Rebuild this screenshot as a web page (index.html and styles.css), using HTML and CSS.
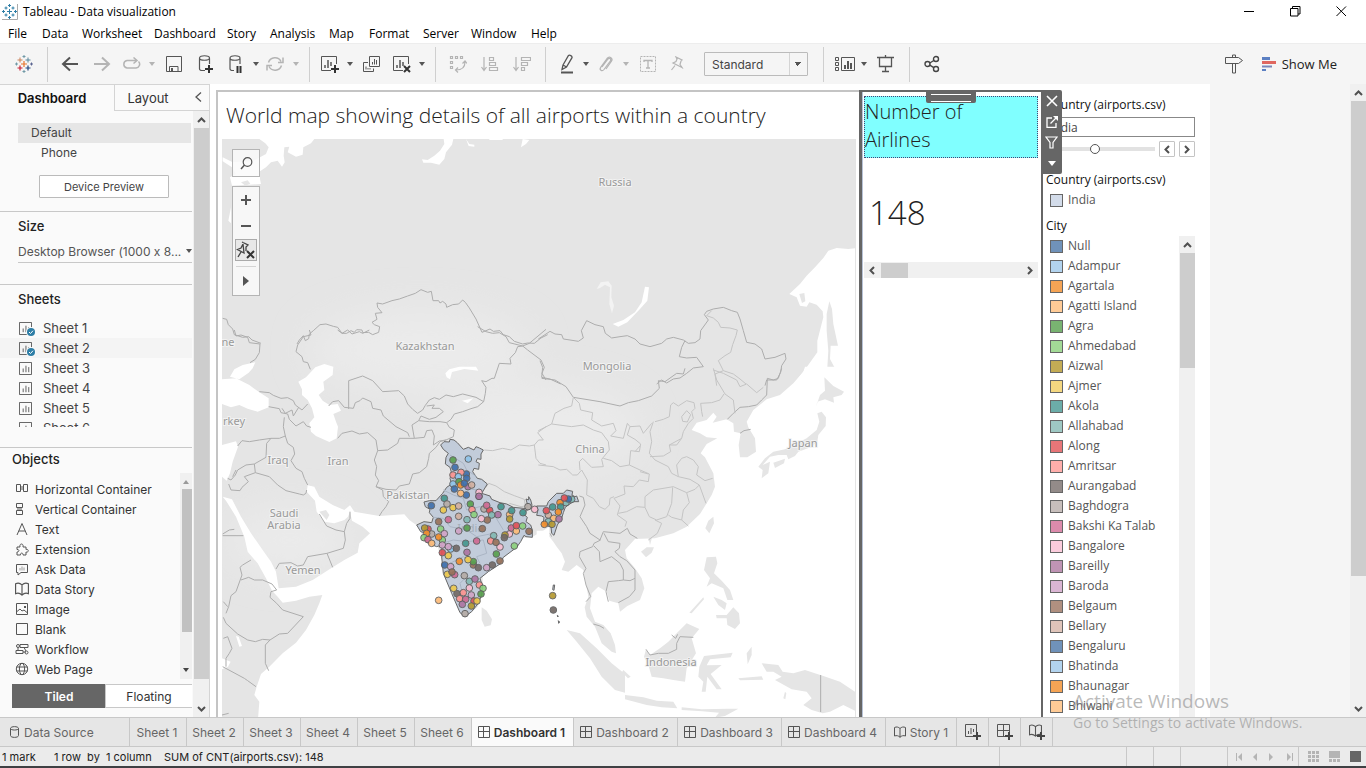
FILE: index.html
```html
<!DOCTYPE html>
<html lang="en">
<head>
<meta charset="utf-8">
<title>Tableau - Data visualization</title>
<meta name="viewport" content="width=device-width, initial-scale=1">
<link rel="stylesheet" href="styles.css">
</head>
<body>
<svg class="defs" width="0" height="0" aria-hidden="true">
  <defs>
    <symbol id="i-sheet" viewBox="0 0 14 14"><path d="M.5.5h13v13H.5zM4.5 7v4M7.500 4v7M10.500 5.500v5.500" fill="none" stroke="#555"/></symbol>
    <symbol id="i-check" viewBox="0 0 10 10"><circle cx="5" cy="5" r="5" fill="#fafafa"/><circle cx="5" cy="5" r="4" fill="#2e7ea6"/><path d="M3 5l1.500 1.500L7 3.700" fill="none" stroke="#fff"/></symbol>
    <symbol id="i-dash" viewBox="0 0 12 12"><path d="M.5.5h11v11H.5zM5.500.5v11M.5 5.500h11" fill="none" stroke="#555"/></symbol>
    <symbol id="i-story" viewBox="0 0 12 12"><path d="M.5 1.500c2-1 4-.5 5.500 1 1.500-1.500 3.500-2 5.500-1v8.500c-2-.8-4-.3-5.500 1.200C4.500 9.700 2.500 9.200.5 10zM6 2.500v9" fill="none" stroke="#555"/></symbol>
    <symbol id="i-up" viewBox="0 0 9 6"><path d="M1 5l3.500-3.500L8 5" fill="none" stroke="#505050" stroke-width="2"/></symbol>
    <symbol id="i-down" viewBox="0 0 9 6"><path d="M1 1l3.500 3.500L8 1" fill="none" stroke="#505050" stroke-width="2"/></symbol>
    <symbol id="i-left" viewBox="0 0 6 9"><path d="M5 1L1.500 4.500 5 8" fill="none" stroke="#505050" stroke-width="2"/></symbol>
    <symbol id="i-right" viewBox="0 0 6 9"><path d="M1 1l3.500 3.500L1 8" fill="none" stroke="#505050" stroke-width="2"/></symbol>
    <symbol id="i-caret" viewBox="0 0 6 4"><path d="M0 0h6L3 4z" fill="currentColor"/></symbol>
    <symbol id="i-plus" viewBox="0 0 8 8"><path d="M4 0v8M0 4h8" fill="none" stroke="#444" stroke-width="2"/></symbol>
  </defs>
</svg>

<div class="app">
  <header class="titlebar">
    <svg class="app-icon" viewBox="0 0 16 16" width="16" height="16" aria-hidden="true"><path d="M0 15.500h15.500V0" fill="none" stroke="#aaa"/><path d="M7.500 5v5M5 7.500h5M4 2.500v3M2.500 4h3M11 2.500v3M9.500 4h3M4 9.500v3M2.500 11h3M11 9.500v3M9.500 11h3M7.500 0v3M6 1.500h3M7.500 12v3M6 13.500h3M1.500 6v3M0 7.500h3M13.500 6v3M12 7.500h3" fill="none" stroke="#2e7ea6"/></svg>
    <h1 class="app-title">Tableau - Data visualization</h1>
    <div class="win-buttons">
      <button type="button" aria-label="Minimize"><svg width="11" height="11" viewBox="0 0 11 11"><path d="M0 5.500h10" stroke="#000"/></svg></button>
      <button type="button" aria-label="Restore"><svg width="11" height="11" viewBox="0 0 11 11"><path d="M.5 2.500h7.500v7.500H.5zM2.500 2.500v-2H10v7.500H8" fill="none" stroke="#000"/></svg></button>
      <button type="button" aria-label="Close"><svg width="11" height="11" viewBox="0 0 11 11"><path d="M.5.5l9.500 9.500M10 .5L.5 10" stroke="#000"/></svg></button>
    </div>
  </header>

  <nav class="menubar" aria-label="Main menu">
    <button type="button">File</button><button type="button">Data</button><button type="button">Worksheet</button><button type="button">Dashboard</button><button type="button">Story</button><button type="button">Analysis</button><button type="button">Map</button><button type="button">Format</button><button type="button">Server</button><button type="button">Window</button><button type="button">Help</button>
  </nav>

  <div class="toolbar" role="toolbar" aria-label="Toolbar">
    <button type="button" class="tool" aria-label="Start page"><svg width="18" height="18" viewBox="0 0 18 18"><g fill="none"><path d="M9 6v6M6 9h6" stroke="#e8762d" stroke-width="1.200"/><path d="M5 2.500v5M2.500 5h5" stroke="#c9825a"/><path d="M13 2.500v5M10.500 5h5" stroke="#59879b"/><path d="M5 10.500v5M2.500 13h5" stroke="#c72035" stroke-width="1.200"/><path d="M13 10.500v5M10.500 13h5" stroke="#1f447e" stroke-width="1.200"/><path d="M9 0v3M7.500 1.500h3M9 15v3M7.500 16.500h3" stroke="#7099a6"/><path d="M1.500 7.500v3M0 9h3" stroke="#7099a6"/><path d="M16.500 7.500v3M15 9h3" stroke="#5b6591"/></g></svg></button>
    <span class="sep"></span>
    <button type="button" class="tool" aria-label="Undo"><svg width="18" height="16" viewBox="0 0 18 16"><path d="M17 8H2M9 1.500L2 8l7 6.500" fill="none" stroke="#555" stroke-width="2"/></svg></button>
    <button type="button" class="tool" aria-label="Redo"><svg width="18" height="16" viewBox="0 0 18 16"><path d="M1 8h15M9 1.500L16 8l-7 6.500" fill="none" stroke="#b4b4b4" stroke-width="2"/></svg></button>
    <button type="button" class="tool split off" aria-label="Replay"><svg width="20" height="14" viewBox="0 0 20 14"><path d="M11 3.500H5a3.800 3.800 0 000 7.500h9a3.800 3.800 0 002.500-6.500M8.500 3.500h6M11.500.5l3.500 3-3.500 3" fill="none" stroke="#b4b4b4" stroke-width="1.500"/></svg><svg class="caret"><use href="#i-caret"/></svg></button>
    <button type="button" class="tool" aria-label="Save"><svg width="16" height="16" viewBox="0 0 16 16"><path d="M.5.5h15v15H.5zM3.500 15.500v-5h8.500v5" fill="none" stroke="#555"/><path d="M5 12h2v3H5z" fill="#555"/></svg></button>
    <button type="button" class="tool" aria-label="New data source"><svg width="16" height="18" viewBox="0 0 16 18"><path d="M7 15.500H4c-1.500 0-2.500-.8-2.500-1.800V3.500M11.500 3.500V9M1.500 3c0-3 10-3 10 0s-10 3-10 0" fill="none" stroke="#555" stroke-width="1.200"/><path d="M11 10v8M7 14h8" stroke="#333" stroke-width="2"/></svg></button>
    <button type="button" class="tool split" aria-label="Pause auto updates"><svg width="20" height="18" viewBox="0 0 20 18"><path d="M8 15.500H6.500c-1.500 0-2.500-.8-2.500-1.800V3.500M14 3.500V9M4 3c0-3 10-3 10 0s-10 3-10 0" fill="none" stroke="#555" stroke-width="1.200"/><path d="M11.500 11v7M14.500 11v7" stroke="#333" stroke-width="2"/></svg><svg class="caret"><use href="#i-caret"/></svg></button>
    <button type="button" class="tool split off" aria-label="Run update"><svg width="18" height="16" viewBox="0 0 18 16"><path d="M2.500 6.500a6.800 6.800 0 0112.500-1M15.500 9.500a6.800 6.800 0 01-12.500 1M17 1.500v5h-5M1 14.500v-5h5" fill="none" stroke="#b4b4b4" stroke-width="1.500"/></svg><svg class="caret"><use href="#i-caret"/></svg></button>
    <span class="sep"></span>
    <button type="button" class="tool split" aria-label="New worksheet"><svg width="20" height="18" viewBox="0 0 20 18"><path d="M11 15.500H1.500V1.500h15V9" fill="none" stroke="#555"/><path d="M5 10v3M8 5v8M11 7v4" stroke="#555" stroke-width="1.500"/><path d="M15 10v8M11 14h8" stroke="#333" stroke-width="2"/></svg><svg class="caret"><use href="#i-caret"/></svg></button>
    <button type="button" class="tool" aria-label="Duplicate"><svg width="18" height="17" viewBox="0 0 18 17"><path d="M6.500.5h10v10h-10zM5 6.500H.5v9h10v-3M9.500 6v2.500M11.500 3v5.500M13.500 4v4.500M3 10.500v3M5 12v1.500M7 12v1.500" fill="none" stroke="#555"/></svg></button>
    <button type="button" class="tool split" aria-label="Clear sheet"><svg width="20" height="18" viewBox="0 0 20 18"><path d="M11 15.500H1.500V1.500h15V9" fill="none" stroke="#555"/><path d="M5 10v3M8 5v8M11 7v4" stroke="#555" stroke-width="1.500"/><path d="M12 11l6 6M18 11l-6 6" stroke="#333" stroke-width="2"/></svg><svg class="caret"><use href="#i-caret"/></svg></button>
    <span class="sep"></span>
    <button type="button" class="tool" aria-label="Swap rows and columns"><svg width="18" height="18" viewBox="0 0 18 18"><path d="M1.500 1.500h2v2h-2zM6.500 1.500h2v2h-2zM11.500 1.500h2v2h-2zM1.500 6.500h2v2h-2zM1.500 11.500h2v2h-2zM16 7c0 5-3 8-9 8M13.500 8.500L16 6l2 2.500M9 12.500L6.500 15 9 17.500" fill="none" stroke="#b4b4b4" stroke-width="1.200"/></svg></button>
    <button type="button" class="tool" aria-label="Sort ascending"><svg width="18" height="16" viewBox="0 0 18 16"><path d="M3 1v13M.5 11L3 14.500 5.500 11M8.500 1.500h4v3h-4zM8.500 6.500h6v3h-6zM8.500 11.500h8v3h-8z" fill="none" stroke="#b4b4b4" stroke-width="1.200"/></svg></button>
    <button type="button" class="tool" aria-label="Sort descending"><svg width="18" height="16" viewBox="0 0 18 16"><path d="M3 1v13M.5 11L3 14.500 5.500 11M8.500 1.500h9v3h-9zM8.500 6.500h6v3h-6zM8.500 11.500h3v3h-3z" fill="none" stroke="#b4b4b4" stroke-width="1.200"/></svg></button>
    <span class="sep"></span>
    <button type="button" class="tool split" aria-label="Highlight"><svg width="20" height="20" viewBox="0 0 20 20"><path d="M5 18.500h12" stroke="#555" stroke-width="2"/><path d="M7 11l5.500-9.500c1-1 4 .5 3.500 2.200L10.500 13 6 15.500zM7 11l3.500 2" fill="none" stroke="#555" stroke-width="1.300"/></svg><svg class="caret"><use href="#i-caret"/></svg></button>
    <button type="button" class="tool split off" aria-label="Group members"><svg width="18" height="18" viewBox="0 0 18 18"><path d="M6 12l6-8c1.500-1.800 3.500.2 2.300 2L8 14.500c-2 2.500-5 .3-3.300-2.200L11 3.500c2.500-3 6.500-.2 4.300 3L10 14" fill="none" stroke="#b4b4b4" stroke-width="1.200"/></svg><svg class="caret"><use href="#i-caret"/></svg></button>
    <button type="button" class="tool" aria-label="Show mark labels"><svg width="16" height="16" viewBox="0 0 16 16"><path d="M.5.5h15v15H.5z" fill="none" stroke="#b4b4b4" stroke-dasharray="2 1"/><path d="M4 6V4.500h8V6M8 4.500V12M6 12h4" fill="none" stroke="#b4b4b4" stroke-width="1.300"/></svg></button>
    <button type="button" class="tool pin" aria-label="Fix axes"><svg width="14" height="16" viewBox="0 0 14 16"><path d="M6 1l6 3-1 1-1 3.500 2 3-9-4.500 3-1.500L7 3zM5 9.500L1.500 14" fill="none" stroke="#b4b4b4" stroke-width="1.200"/></svg></button>
    <select class="fit" aria-label="Fit"><option>Standard</option></select>
    <span class="sep"></span>
    <button type="button" class="tool split" aria-label="Show cards"><svg width="22" height="16" viewBox="0 0 22 16"><path d="M1.500 1.500h3v3h-3zM1.500 6.500h3v3h-3zM1.500 11.500h3v3h-3zM7.500 1.500h13v13h-13z" fill="none" stroke="#555"/><path d="M11 9v4M14 5v8M17 7v6" stroke="#555" stroke-width="2"/></svg><svg class="caret"><use href="#i-caret"/></svg></button>
    <button type="button" class="tool" aria-label="Presentation mode"><svg width="18" height="18" viewBox="0 0 18 18"><path d="M0 2.500h17M2.500 3v8.500h12V3M8.500 0v2M8.500 11.500V16M5 16.500h7" fill="none" stroke="#555" stroke-width="1.300"/></svg></button>
    <span class="sep"></span>
    <button type="button" class="tool" aria-label="Share"><svg width="16" height="18" viewBox="0 0 16 18"><g fill="none" stroke="#444" stroke-width="1.400"><circle cx="3.500" cy="9" r="2.500"/><circle cx="12" cy="4" r="2.500"/><circle cx="12" cy="14" r="2.500"/><path d="M5.800 8l4-2.500M5.800 10.200l4 2.500"/></g></svg></button>
    <span class="grow"></span>
    <button type="button" class="tool" aria-label="Guide"><svg width="20" height="20" viewBox="0 0 20 20"><path d="M1.500 3.500h13l4 3-4 3h-13zM8.500 3.500V1h3v2.500M8.500 9.500v9.500h3V9.500" fill="none" stroke="#555"/></svg></button>
    <button type="button" class="showme"><svg width="15" height="14" viewBox="0 0 15 14"><path d="M0 1.500h8" stroke="#5b7fc2" stroke-width="3"/><path d="M0 5.500h14" stroke="#e0675f" stroke-width="3"/><path d="M0 9.500h10" stroke="#7b87b8" stroke-width="2"/><path d="M0 13h4" stroke="#5b7fc2" stroke-width="2"/></svg>Show Me</button>
  </div>

  <main class="body">
    <aside class="side">
      <div class="side-tabs">
        <button type="button" class="side-tab on">Dashboard</button>
        <button type="button" class="side-tab">Layout</button>
        <button type="button" class="collapse" aria-label="Collapse pane"><svg width="7" height="10" viewBox="0 0 7 10"><path d="M6 .5L1 5l5 4.500" fill="none" stroke="#555" stroke-width="1.300"/></svg></button>
      </div>
      <div class="side-main">
        <div class="side-content">
          <section class="devices">
            <ul class="device-list"><li class="on">Default</li><li>Phone</li></ul>
            <button type="button" class="preview">Device Preview</button>
          </section>
          <section class="size">
            <h2>Size</h2>
            <button type="button" class="size-pick">Desktop Browser (1000 x 8...<svg class="caret"><use href="#i-caret"/></svg></button>
          </section>
          <section class="sheets">
            <h2>Sheets</h2>
            <ul class="sheet-list">
              <li><svg class="s-ico"><use href="#i-sheet"/></svg><svg class="s-check"><use href="#i-check"/></svg>Sheet 1</li>
              <li class="hover"><svg class="s-ico"><use href="#i-sheet"/></svg><svg class="s-check"><use href="#i-check"/></svg>Sheet 2</li>
              <li><svg class="s-ico"><use href="#i-sheet"/></svg>Sheet 3</li>
              <li><svg class="s-ico"><use href="#i-sheet"/></svg>Sheet 4</li>
              <li><svg class="s-ico"><use href="#i-sheet"/></svg>Sheet 5</li>
              <li><svg class="s-ico"><use href="#i-sheet"/></svg>Sheet 6</li>
            </ul>
          </section>
          <section class="objects">
            <h2>Objects</h2>
            <div class="object-box">
              <ul class="object-list">
                <li><svg viewBox="0 0 14 14"><path d="M1.500 2.500h4v7h-4zM8.500 2.500h4v7h-4z"/><path d="M6 4h2v4H6z" fill="#aaa" stroke="none"/></svg>Horizontal Container</li>
                <li><svg viewBox="0 0 14 14"><path d="M1.500 1.500h6v4h-6zM1.500 8.500h6v4h-6z"/><path d="M2 6h5v2H2z" fill="#aaa" stroke="none"/></svg>Vertical Container</li>
                <li><svg viewBox="0 0 14 14"><path d="M2 13L7 1.500 12 13M3.800 9h6.400"/></svg>Text</li>
                <li><svg viewBox="0 0 14 14"><path d="M2 5h3c-1-4 4-4 3 0h3v2.500c3-1 3 3.500 0 2.500V13H8c.5-2.500-3-2.500-2.500 0H2v-3c2.500 0 2.500-3 0-2.500z"/></svg>Extension</li>
                <li><svg viewBox="0 0 14 14"><path d="M1.500 2.500h11v8H6L3 13v-2.500H1.500z"/><path d="M5 6v2.500M7 4.500v4M9 5.500v3" stroke="#999"/></svg>Ask Data</li>
                <li><svg viewBox="0 0 12 12"><use href="#i-story"/></svg>Data Story</li>
                <li><svg viewBox="0 0 14 14"><path d="M1.500 1.500h11v11h-11zM2 9.500l3-2.500 2 2 2-1 3 2.500"/><path d="M9 4h2v2H9z" fill="#555" stroke="none"/></svg>Image</li>
                <li><svg viewBox="0 0 14 14"><path d="M1.500 1.500h11v11h-11z"/></svg>Blank</li>
                <li><svg viewBox="0 0 14 14"><path d="M5 2.500h8v3H5zM1 8.500h7v3H1zM8 10h3"/><circle cx="3" cy="4" r="1.500"/><circle cx="11.500" cy="10.500" r="1.500"/><path d="M3 5.500v3M9 5.500L11 9"/></svg>Workflow</li>
                <li><svg viewBox="0 0 14 14"><circle cx="7" cy="7" r="5.700"/><ellipse cx="7" cy="7" rx="2.600" ry="5.700"/><path d="M1.500 5h11M1.500 9h11"/></svg>Web Page</li>
              </ul>
              <div class="mini-bar"><svg class="caret flip"><use href="#i-caret"/></svg><div class="mini-thumb"></div><svg class="caret"><use href="#i-caret"/></svg></div>
            </div>
            <div class="place"><button type="button" class="on">Tiled</button><button type="button">Floating</button></div>
          </section>
        </div>
        <div class="vbar"><svg class="arr"><use href="#i-up"/></svg><div class="thumb side-thumb"></div><svg class="arr"><use href="#i-down"/></svg></div>
      </div>
    </aside>

    <div class="dash">
      <section class="map-panel">
        <h2 class="map-title">World map showing details of all airports within a country</h2>
        <div class="map-view">
          <svg class="map" viewBox="222 139 634 578" preserveAspectRatio="xMinYMin slice" role="img" aria-label="Map of airports in India">
            <defs><filter id="soft" x="-20%" y="-20%" width="140%" height="140%"><feGaussianBlur stdDeviation="18"/></filter></defs>
            <rect class="land" x="0" y="139" width="2000" height="1200"/>
            <g fill="#ebebeb" filter="url(#soft)"><ellipse cx="420" cy="350" rx="110" ry="40"/><ellipse cx="540" cy="430" rx="100" ry="45"/><ellipse cx="290" cy="540" rx="60" ry="30"/></g>

            <g transform="translate(216 84) scale(.33333)">
              <path class="sea" d="M130 165L295 165 285 178 262 190 260 212 240 218 215 205 220 188 205 190 203 215 206 235 198 248 185 230 165 235 150 250 132 262 132 285 135 300 100 302 48 305 42 280 60 270 48 250 20 232 20 220 50 235 110 232 150 210 158 190 148 178zM683 165L712 165 708 182 690 205 685 225 670 242 645 236 622 236 618 226 635 228 655 215 672 200 685 180zM750 165L760 180 775 182 775 188 758 186zM915 190L920 165 940 168 930 180zM45 370l-8 40 8 8zM820 165h40v3h-40z"/>
              <path class="land" d="M75 295l20-6 8 10-15 6z"/>
              <path class="line" d="M20 703L32 706 37 722 50 735 55 752 80 760 98 758 108 768 135 778M243 780L250 768 262 755 268 770 278 764 280 750 292 740 312 722 330 720 352 727 365 730 378 748 392 748 405 740 415 745 422 737 438 738 440 746 458 745 470 752 488 745 491 728 475 722 468 715 483 706 478 688 498 686 485 670 483 657 500 660 528 650 550 645 575 636 598 628 615 617 635 625 646 622 651 650 668 650 672 657 680 652 690 660 692 670 710 662 728 660 740 648 748 655 760 672 780 705 798 745 822 735 832 742 852 740 862 752 880 758 895 772 920 780 935 777 955 778 975 762 995 752"/>
            </g>

            <g transform="translate(216 330) scale(.33333)">
              <path class="sea" d="M125 1180L130 1115 115 1095 122 1070 135 1032 160 1010 200 970 240 938 270 900 295 855 310 820 319 795 280 800 240 812 200 818 185 800 168 782 150 745 125 700 95 665 85 620 60 560 30 512 20 500 48 508 75 560 105 610 140 660 165 695 180 725 188 775 240 770 290 750 350 712 385 690 425 668 430 640 462 610 440 590 408 572 402 545 396 560 385 570 355 580 325 575 302 545 297 512 272 485 275 466 295 470 310 500 350 525 385 540 402 526 415 545 490 558 565 553 580 570 608 590 628 635 665 650 680 700 690 740 710 790 735 850 750 860 785 830 800 790 800 740 850 695 900 650 915 625 950 620 985 600 1000 590 1000 1400 125 1400zM18 148L60 145 100 165 130 187 158 205 158 232 125 245 95 236 70 225 45 232 18 222zM42 140L55 118 80 105 118 97 110 115 98 128 70 148zM247 155L270 142 298 112 325 102 352 110 350 135 322 155 325 180 308 195 320 212 340 225 365 222 375 242 352 252 360 275 366 290 362 325 340 336 300 318 285 305 280 280 295 262 288 235 275 210 258 195 258 178zM18 345L60 334 66 350 50 395 42 430 32 452 18 440zM688 130L700 118 730 110 780 110 787 122 745 117 708 126 702 148 692 142zM738 212L772 205 755 220zM60 918l8 2 10 28-8 2zM18 985l26 10-8 15-18 8z"/>
              <path class="land" d="M797 832L812 842 828 868 824 886 806 890 797 870zM310 545L330 540 340 555 332 570z"/>
              <path class="line" d="M55 0L60 18 75 15 95 22 100 38 132 42 130 68 118 88 102 98M280 0L285 15 262 20 245 45 240 65 258 80 262 95 275 98 283 118M365 0L378 10 395 0 408 12 430 5 440 10 460 0M785 -10L810 5 830 10 850 8 870 20 880 38 920 48 940 40 990 -2M398 237L398 152 440 138 470 152 500 185 548 182 565 198 575 222 590 238 605 250M338 228L350 215 368 212 385 232 412 235 418 218 432 212 440 204 465 215 470 235 495 240 502 258 540 290 575 308 580 320M605 250L620 240 628 226 640 210 655 203 670 208 690 195 712 200 740 192 780 202 803 215 808 190 810 172 797 152 810 155 828 145 835 145 850 100 885 102 882 85 898 68 905 50 920 48 935 60 975 90 985 112 978 130 990 150M803 215L785 230 765 236 740 245 715 252 705 268 692 278 672 275 640 275 608 272 615 258 640 268 660 262 682 245 670 235 648 235 655 225 632 228M608 272L588 285 595 325M692 278L700 292 715 300 712 320 690 330 670 333 652 345 655 318 648 300 632 302 625 322 595 325 550 325 545 340 515 360 485 362M365 325L378 310 408 303 430 312 455 308 480 330 485 362 475 390 482 410 478 435 488 452 480 470 500 480 502 500 518 515 510 530 498 545 490 558M480 470L510 478 540 480 550 468 580 462 590 432 610 428 632 410 638 385 640 370 660 352 672 335 690 330M130 185L160 188 172 196 195 205 215 203 232 212 238 225 258 240 275 222M158 230L190 236 195 248 215 252 220 268 240 288 262 275 272 288 285 292M198 235L208 250 228 240 232 258 248 232M205 262L202 290 208 318 215 340 232 352 236 372 225 392 240 415 258 425 265 445 275 465M65 348L78 332 100 335 130 330 165 325 190 325 208 318M165 325L152 340 150 382 115 402 90 405 65 420 58 435 45 450 35 445M115 402L118 428 85 440 97 455 78 472 72 482 45 480 38 462M50 440L60 420M118 428L160 440 185 465 210 482 250 492 262 495 270 490 272 480M310 552L332 588 360 600 385 605 388 630 382 655 333 670 275 680 262 705 245 708 225 698 190 700 180 717M333 670L350 712M385 605L392 580 402 565 402 545M20 617L82 617M105 690L80 705 72 712 78 735 60 785 45 797 38 830 30 850M22 815L35 830M22 862L30 880 65 912 95 930 118 935 140 928 162 930 190 912 215 910 262 860 200 840 182 820 162 802 165 785 182 780 168 762 140 750 115 750 98 742 75 750M162 930L148 945 148 1000 158 1022M22 925L35 920 48 955 40 970 30 985 30 1010M20 1010L85 1045 95 1052 120 1070M18 1155L38 1150M20 612L40 600 55 598"/>
              <path class="line thin" d="M805 360L830 362 860 355 885 360 910 345 940 348 955 345 960 385 972 400 990 405M955 345L968 330 982 330 965 308 990 290M810 472L818 460 840 468 865 485 895 497 925 508 928 528M928 528L915 530 880 520"/>
            </g>

            <g transform="translate(540 84) scale(.33333)">
              <path class="sea" d="M948 492L925 495 890 492 865 500 850 522 825 550 800 575 780 600 748 630 770 640 780 665 800 668 808 655 830 662 848 682 850 700 832 770 832 805 800 850 760 902 1100 902 2400 902 2400 492z"/>
              <path class="sea faint" d="M170 615L182 595 205 592 215 605 214 640 222 665 216 688 208 660 210 610 195 602 180 612z"/>
              <path class="sea" d="M315 608L327 610 322 650 300 675 262 715 235 728 218 720 250 708 285 685 305 655z"/>
              <path class="land" d="M868 652L876 675 880 720 894 785 872 785 870 825 886 855 872 862 880 885 855 902 853 885 862 850 865 800 860 740 860 690zM778 630l15-3 3 25-10 5z"/>
              <path class="line" d="M-5 765L15 752 30 742 45 750 65 752 70 765 90 768 115 772 130 762 124 740 140 710 165 722 190 728 196 748 215 762 240 758 262 755 285 765 300 780 330 788 365 778 380 765 400 760 430 768 445 778 465 776 480 765 482 740 505 708 493 692 500 682 520 675 550 670 575 680 592 685 600 705 610 740 620 775 645 780 665 795 675 825 705 820 735 808 738 825 725 845 722 865 710 888 680 888 675 905M435 770L425 790 418 818 440 822 470 820 490 848 460 852 440 868 420 882 400 885 380 897 365 888 350 900M0 830L8 850 5 880 30 885 62 900"/>
              <path class="line thin" d="M515 680L500 695 520 702 535 715 542 730 570 732 592 738 588 755 578 782 572 805 555 815 535 830 550 860 525 870 530 905M550 860L580 870 600 885 618 900"/>
            </g>

            <g transform="translate(540 370) scale(.33333)">
              <path class="sea" d="M10 482L28 500 40 515 50 530 65 550 75 575 65 600 85 605 110 585 130 600 145 680 134 712 140 740 165 770 185 820 215 845 228 850 225 825 212 790 190 765 165 755 150 715 155 670 175 650 200 665 208 692 235 700 240 725 262 708 300 690 313 655 305 625 285 595 260 565 255 540 285 507 345 505 400 490 440 470 480 432 500 400 515 375 525 350 520 310 495 262 482 250 500 222 532 205 500 202 480 190 455 180 470 158 500 150 520 128 530 140 518 158 560 148 580 160 582 185 602 190 596 225 600 262 622 262 648 245 645 205 625 172 620 155 640 120 680 88 720 75 760 40 790 5 795 -10 2400 -10 2400 1400 -10 1400 -10 482z"/>
              <path class="land" d="M853 22L880 48 912 65 905 75 880 82 882 98 855 88 832 95 828 110 840 75 855 62zM845 125L858 142 857 168 835 195 832 215 812 232 775 245 765 258 745 268 740 255 715 255 690 260 668 285 690 275 685 310 665 325 668 300 655 290 675 265 700 245 735 238 760 225 800 205 830 180 838 155 832 130zM700 278L735 266 732 280 705 294zM520 440L522 460 508 490 496 475 505 452zM303 545L320 532 342 532 335 548 318 562zM325 500l5 25 6-22zM500 562L528 560 532 580 522 610 545 632 570 660 580 690 562 690 550 655 515 640 500 650 510 625 492 600zM520 680L545 690 560 700 555 720 535 705zM580 712L597 730 600 760 585 777 562 765 560 745 530 745 528 735 560 735zM448 728L490 682 492 688 455 730zM318 838L330 855 360 835 385 815 410 790 440 760 478 777 455 805 468 850 440 895 435 935 400 930 370 925 335 920 325 885 312 860zM80 780L120 790 170 835 215 880 255 912 255 968 225 960 185 920 150 865 110 815zM250 900l22 20-8 5-18-18zM255 975L310 982 350 992 400 995 412 1015 365 1012 320 1005 255 988zM425 1012l60 6 80-2 30 0-40 22-30 5 12-15-50-4-62-4zM478 890L492 858 578 848 572 862 510 868 500 886 545 885 512 912 545 958 530 958 502 920 497 965 485 965 490 935 475 920zM620 850l15-20 0 25-12 28zM595 925l70-6 5 10-70 2zM665 880L715 885 728 905 760 910 795 900 850 918 900 935 945 965 945 1022 910 1005 870 1025 848 1030 815 1020 790 1005 815 985 800 965 755 958 705 930 725 920 700 905 680 905zM730 985l5-20 4 5-3 18z"/>
              <path class="line" d="M435 -5L430 12 410 10 375 35 355 32 358 55 335 78 295 92 265 98 240 108 180 95 100 82 78 50 45 30 5 25M725 -5L715 25 700 30 682 25 680 75 665 90 650 105 625 110 600 112 580 130 562 148M600 190L612 182 632 178M118 378L130 382 135 405 120 440 140 470 150 490 180 510 190 485 240 490 262 475 270 492 292 505M182 510L162 520 158 530 120 545 118 560 138 595 130 610 138 645 152 680 138 695M162 528L178 545 180 575 215 560 240 580 250 600 250 630 235 632 205 635 198 665 205 695M192 490L205 515 240 520 238 535 225 545 240 560 260 572 285 600 285 660 268 680 235 698M250 630L270 632 285 625M160 762L180 768 192 775M318 838L330 855 355 850 385 850 410 838 410 820 420 800 460 802M395 795l12 10 6-12M842 915L842 1026M35 500L30 490"/>
              <path class="line thin" d="M-5 285L40 290 60 300 80 298 98 315 112 315 125 300 142 330 140 375 160 385 178 410 195 418 208 405 210 385 222 380M100 82L118 100 122 120 158 128 155 150 185 168 220 160 228 182 212 198 250 205 262 160 270 170 262 195 285 208 302 222 298 245 272 242 268 285 240 290 215 272 190 265M268 285L300 300 328 312 325 335 298 330 280 350 252 348 255 372 222 385 240 408 232 435 260 455 255 470M100 82L95 108 72 115 45 130 35 162 -5 182M35 162L95 170 130 165 160 180 185 188 205 215 208 240 185 268 190 290 155 292 128 265 118 275 120 300M340 155L330 185 335 215 328 250 345 270 385 290 395 310 415 320 450 328 478 345 465 358 440 368 400 350 340 360 315 380 315 412 290 410 260 425 235 430M345 155L370 148 388 140 392 105 400 98 415 108 440 92 462 98 465 115 455 125 460 145 445 160 430 185 425 205 388 225 392 245 370 258 330 260M425 140l15-18 12 12-10 22-14-2zM425 205L410 225 388 225M425 265L410 285 415 320M425 265L440 260 460 270 475 290 470 315 495 332 518 325M552 72L540 90 515 98 482 100 485 125 488 140M520 -5L530 30 555 72 580 90 585 130M520 0L550 10 590 30 600 50 620 42 650 68 670 52M315 412L328 440 350 450 380 440 395 400 398 352M300 305L325 312M345 450L365 460 352 490 325 510M440 368L448 398 430 420 425 450 395 442 385 435M425 450L445 468M478 345L498 400M270 170L300 168 310 190 335 160M285 245L300 228"/>
            </g>

            <g class="labels">
              <text x="615" y="186">Russia</text><text x="425" y="350">Kazakhstan</text><text x="607" y="370">Mongolia</text><text x="590" y="453">China</text><text x="803" y="447">Japan</text><text x="338" y="465">Iran</text><text x="278" y="464">Iraq</text><text x="408" y="499">Pakistan</text><text x="284" y="517">Saudi</text><text x="284" y="529">Arabia</text><text x="303" y="574">Yemen</text><text x="671" y="666">Indonesia</text><text x="228" y="346">ne</text><text x="234" y="425">rkey</text>
            </g>

            <g transform="translate(400 430) scale(.33333)">
              <path class="india" d="M122 45L132 35 148 36 150 28 162 30 172 38 190 58 205 52 222 60 228 50 238 54 250 60 243 72 243 88 232 86 228 95 238 100 236 118 222 115 218 125 232 145 245 148 262 162 245 190 270 198 275 208 300 218 320 222 340 232 380 236 382 222 378 207 386 210 386 200 392 210 396 225 394 234 382 240 370 252 382 262 378 275 392 285 397 300 397 322 378 320 372 316 362 335 350 352 310 382 300 402 265 425 240 445 248 470 245 495 235 520 215 545 195 560 180 548 155 490 130 430 125 380 126 345 110 350 85 340 72 328 80 310 62 305 50 285 72 275 95 278 100 262 88 248 90 238 76 230 72 216 88 212 108 212 128 190 140 172 155 162 150 145 155 130 150 112 136 102 138 82 145 70 130 58zM410 228L440 228 445 215 470 190 490 190 500 180 518 184 516 195 525 200 530 198 536 215 520 215 505 225 496 232 490 248 485 265 472 285 462 316 455 310 453 290 440 288 430 278 432 262 425 258 410 256 414 240zM460 465l4 0-2 16-4-2zM472 556l3 2-2 3zM475 572l4 4-3 4z"/>
              <path class="states" d="M150 75L190 100 200 120 230 140M150 140L180 160 200 175 230 180M130 180L160 195 190 205 200 240 240 230 280 250 310 300M100 262L130 265 150 290 200 300 230 320 280 310 300 340M126 340L160 330 200 335 250 330 260 370 230 380 240 400M150 400L190 380 220 400M200 440L180 460 190 500M340 250L330 290 360 300"/>
              <text class="india-name" x="172" y="305">India</text>
              <g id="airports"></g>
            </g>
          </svg>
          <div class="map-tools">
            <button type="button" class="map-search" aria-label="Search map"><svg width="13" height="13" viewBox="0 0 13 13"><circle cx="7.500" cy="5" r="4.300" fill="none" stroke="#555" stroke-width="1.200"/><path d="M4.500 8L1 12" stroke="#555" stroke-width="1.500"/></svg></button>
            <div class="map-zoom">
              <button type="button" aria-label="Zoom in"><svg width="10" height="10" viewBox="0 0 10 10"><path d="M5 0v10M0 5h10" stroke="#555" stroke-width="2"/></svg></button>
              <button type="button" aria-label="Zoom out"><svg width="10" height="10" viewBox="0 0 10 10"><path d="M0 5h10" stroke="#555" stroke-width="2"/></svg></button>
              <button type="button" class="reset" aria-label="Reset map"><svg width="20" height="19" viewBox="0 0 20 19"><path d="M6 1l6 3-2 2 0 4M8 12L1.500 8.500 5 7 7 3zM5 11l-3 5" fill="none" stroke="#444" stroke-width="1.300"/><path d="M11 10l7 7M18 10l-7 7" stroke="#333" stroke-width="2"/></svg></button>
              <button type="button" class="more" aria-label="More tools"><svg width="8" height="10" viewBox="0 0 8 10"><path d="M1 0l6 5-6 5z" fill="#555"/></svg></button>
            </div>
          </div>
        </div>
      </section>

      <section class="count-panel">
        <div class="grip"></div>
        <h2 class="count-title">Number of Airlines</h2>
        <p class="count">148</p>
        <div class="hbar"><svg class="harr"><use href="#i-left"/></svg><div class="hthumb"></div><svg class="harr"><use href="#i-right"/></svg></div>
        <div class="panel-menu">
          <button type="button" aria-label="Remove"><svg width="12" height="12" viewBox="0 0 12 12"><path d="M1 1l10 10M11 1L1 11" stroke="#fff" stroke-width="1.600"/></svg></button>
          <button type="button" aria-label="Go to sheet"><svg width="12" height="12" viewBox="0 0 12 12"><path d="M6 2H1v9.500h9V7M4.500 7.500L10 2" fill="none" stroke="#fff" stroke-width="1.300"/><path d="M7 0h5v5z" fill="#fff"/></svg></button>
          <button type="button" aria-label="Use as filter"><svg width="13" height="13" viewBox="0 0 13 13"><path d="M1 1h11L8 6.500V12H5V6.500z" fill="none" stroke="#fff" stroke-width="1.200"/></svg></button>
          <button type="button" aria-label="More options"><svg width="8" height="5" viewBox="0 0 8 5"><path d="M0 0h8L4 5z" fill="#fff"/></svg></button>
        </div>
      </section>

      <section class="legends">
        <label class="leg-head" for="country">Country (airports.csv)</label>
        <input id="country" class="country" type="text" value="India">
        <div class="slide-row">
          <input type="range" class="slide" min="0" max="100" value="44" aria-label="Country position">
          <button type="button" aria-label="Previous country"><svg width="6" height="9"><use href="#i-left"/></svg></button>
          <button type="button" aria-label="Next country"><svg width="6" height="9"><use href="#i-right"/></svg></button>
        </div>
        <h3 class="leg-head">Country (airports.csv)</h3>
        <ul class="leg-list one"><li><i class="sw k-in"></i>India</li></ul>
        <h3 class="leg-head">City</h3>
        <div class="city">
          <ul class="leg-list">
            <li><i class="sw k0"></i>Null</li><li><i class="sw k1"></i>Adampur</li><li><i class="sw k2"></i>Agartala</li><li><i class="sw k3"></i>Agatti Island</li><li><i class="sw k4"></i>Agra</li><li><i class="sw k5"></i>Ahmedabad</li><li><i class="sw k6"></i>Aizwal</li><li><i class="sw k7"></i>Ajmer</li><li><i class="sw k8"></i>Akola</li><li><i class="sw k9"></i>Allahabad</li><li><i class="sw k10"></i>Along</li><li><i class="sw k11"></i>Amritsar</li><li><i class="sw k12"></i>Aurangabad</li><li><i class="sw k13"></i>Baghdogra</li><li><i class="sw k14"></i>Bakshi Ka Talab</li><li><i class="sw k15"></i>Bangalore</li><li><i class="sw k16"></i>Bareilly</li><li><i class="sw k17"></i>Baroda</li><li><i class="sw k18"></i>Belgaum</li><li><i class="sw k19"></i>Bellary</li><li><i class="sw k0"></i>Bengaluru</li><li><i class="sw k1"></i>Bhatinda</li><li><i class="sw k2"></i>Bhaunagar</li><li><i class="sw k3"></i>Bhiwani</li>
          </ul>
          <div class="vbar"><svg class="arr"><use href="#i-up"/></svg><div class="thumb city-thumb"></div></div>
        </div>
      </section>
      <div class="gutter"></div>
      <div class="vbar"><svg class="arr"><use href="#i-up"/></svg><div class="thumb page-thumb"></div><svg class="arr"><use href="#i-down"/></svg></div>
    </div>
  </main>

  <nav class="tabs" aria-label="Sheets">
    <button type="button" class="tab source"><svg width="9" height="12" viewBox="0 0 9 12"><path d="M.5 2.500c0-2.500 8-2.500 8 0v7c0 2.500-8 2.500-8 0zM.5 2.500c0 2 8 2 8 0" fill="none" stroke="#555"/></svg>Data Source</button>
    <button type="button" class="tab sheet">Sheet 1</button><button type="button" class="tab sheet">Sheet 2</button><button type="button" class="tab sheet">Sheet 3</button><button type="button" class="tab sheet">Sheet 4</button><button type="button" class="tab sheet">Sheet 5</button><button type="button" class="tab sheet">Sheet 6</button>
    <button type="button" class="tab board on"><svg class="t-ico"><use href="#i-dash"/></svg>Dashboard 1</button>
    <button type="button" class="tab board"><svg class="t-ico"><use href="#i-dash"/></svg>Dashboard 2</button>
    <button type="button" class="tab board"><svg class="t-ico"><use href="#i-dash"/></svg>Dashboard 3</button>
    <button type="button" class="tab board"><svg class="t-ico"><use href="#i-dash"/></svg>Dashboard 4</button>
    <button type="button" class="tab story"><svg class="t-ico"><use href="#i-story"/></svg>Story 1</button>
    <button type="button" class="tab add" aria-label="New worksheet"><svg width="16" height="16" viewBox="0 0 16 16"><path d="M8 12.500H.5V.5h11V8M3.500 7v3M6 4v6M8.500 5v3" fill="none" stroke="#555"/><use href="#i-plus" x="8" y="8" width="8" height="8"/></svg></button>
    <button type="button" class="tab add" aria-label="New dashboard"><svg width="16" height="16" viewBox="0 0 16 16"><path d="M8 12.500H.5V.5h12V8M6.500.5v12M.5 6.500h12" fill="none" stroke="#555"/><use href="#i-plus" x="8" y="8" width="8" height="8"/></svg></button>
    <button type="button" class="tab add" aria-label="New story"><svg width="16" height="16" viewBox="0 0 16 16"><use href="#i-story" width="13" height="13"/><use href="#i-plus" x="8" y="8" width="8" height="8"/></svg></button>
  </nav>

  <footer class="status">
    <span class="st-mark">1 mark</span><span class="st-rows">1 row&nbsp; by&nbsp; 1 column</span><span class="st-sum">SUM of CNT(airports.csv): 148</span>
    <span class="grow"></span>
    <span class="cell c127"></span><span class="cell c27"></span><span class="cell c27"></span><span class="cell c47"></span>
    <span class="cell nav"><svg width="59" height="8" viewBox="0 0 59 8"><path d="M1 0h1v8H1zM7 0v8L3 4zM22 0v8l-4-4zM34 0v8l4-4zM52 0v8l4-4zM57 0h1v8h-1z" fill="#b4b4b4"/></svg></span>
    <span class="cell views"><svg width="54" height="11" viewBox="0 0 54 11"><path d="M0 0h3v3H0zM4 0h3v3H4zM8 0h3v3H8zM0 4h3v3H0zM4 4h3v3H4zM8 4h3v3H8zM0 8h3v3H0zM4 8h3v3H4zM8 8h3v3H8zM21 0h11v7H21zM21 8h3v3h-3zM25 8h3v3h-3zM29 8h3v3h-3z" fill="#b4b4b4"/><path d="M42 0h11v11H42z" fill="#666"/></svg></span>
  </footer>
  <div class="edge"></div>

  <div class="watermark"><strong>Activate Windows</strong><span>Go to Settings to activate Windows.</span></div>
</div>
<script src="airports.js"></script>
</body>
</html>
```
FILE: airports.js
```js
const palette = {
  B: "#3f70ad", b: "#8fc4ea", o: "#f28e2b", p: "#fdbb78", G: "#59a14f", g: "#8cd17d",
  d: "#b69a30", y: "#edc94e", T: "#45978f", t: "#83b9b3", R: "#e15157", s: "#fd9490",
  D: "#736a66", a: "#b5aca7", r: "#cf6a92", k: "#f8bcd0", u: "#ad75a2", l: "#d1a3c6",
  n: "#99725b", w: "#d2b0a0"
};

const airports = [
  "G159,90 b205,87 B165,112 B199,132 s183,127 s159,135 b175,140 B200,145 b159,162 G177,155 o182,165 u204,170 B193,160",
  "w215,165 B163,177 B199,195 p182,190 u237,199 k237,187 u237,199 T133,205 a141,222 B94,227 y130,240 y159,233 w176,228",
  "G211,222 s216,239 g222,254 a252,237 R269,241 r260,226 T303,230 p329,254 T335,242 T369,248 d329,267 u294,254 t275,255",
  "n262,270 k244,266 t201,269 w176,259 r145,269 n116,275 R84,297 d74,294 a95,312 o80,310 g72,323 r84,329 p95,340",
  "g122,297 l133,311 g127,330 o116,321 l176,303 G201,294 n247,296 b152,357 l127,345 l145,350 R127,368 y145,377 D169,355",
  "T197,340 r230,333 u201,367 o178,394 n220,405 G220,395 y204,389 D235,413 l260,413 D277,405 n300,393 G289,372 k300,351",
  "g343,348 t281,317 s272,333 n288,337 k328,312 d315,315 D313,323 r334,294 p349,303 R349,287 g368,288 n387,304 B134,405",
  "l152,410 y142,433 r164,434 n156,426 a193,437 t208,454 u225,447 D171,491 y161,475 s190,488 k208,474 s238,465 g249,475",
  "G243,492 l214,495 s179,506 r197,508 u187,523 R222,513 y231,513 d214,528 a195,551 p116,511 d458,497 D460,540",
  "a384,230 k404,238 w445,255 R439,242 T458,231 t498,218 o480,218 T482,231 t515,208 B505,207 R493,204 o475,246 p461,265",
  "u477,267 t445,275 o433,283 d456,283"
].join(" ").split(" ");

const layer = document.getElementById("airports");
for (const entry of airports) {
  const [x, y] = entry.slice(1).split(",");
  const dot = document.createElementNS("http://www.w3.org/2000/svg", "circle");
  dot.setAttribute("cx", x);
  dot.setAttribute("cy", y);
  dot.setAttribute("r", 10);
  dot.setAttribute("fill", palette[entry[0]]);
  layer.appendChild(dot);
}
```
FILE: styles.css
```css
* { box-sizing: border-box; }
html, body { height: 100%; margin: 0; }
body { font-family: Inter, "Open Sans", sans-serif; font-size: 12px; color: #444; background: #fff; overflow: hidden; }
ul { list-style: none; margin: 0; padding: 0; }
h1, h2, h3, p { margin: 0; font-weight: normal; }
button { font: inherit; color: inherit; background: none; border: 0; padding: 0; margin: 0; }
svg { flex: none; }
.defs { position: absolute; }
.grow { flex: 1; }

.app { position: relative; display: flex; flex-direction: column; height: 100vh; min-height: 600px; }

.titlebar { display: flex; align-items: center; height: 23px; padding-left: 2px; flex: none; }
.app-title { margin-left: 5px; font: 12px/20px "Open Sans", sans-serif; color: #000; }
.win-buttons { display: flex; margin-left: auto; height: 20px; padding-right: 2px; }
.win-buttons button { width: 46px; display: flex; align-items: center; justify-content: center; }

.menubar { display: grid; grid-template-columns: 34px 40px 72px 73px 43px 59px 40px 54px 48px 60px 40px; padding-left: 8px; height: 20px; flex: none; }
.menubar button { text-align: left; font: 12px/20px "Open Sans", sans-serif; padding-top: 1px; color: #000; white-space: nowrap; }

.toolbar { display: flex; align-items: center; height: 41px; padding: 0 29px 0 8px; background: #f5f5f5; border-top: 1px solid #ededed; flex: none; }
.tool { width: 32px; height: 32px; display: flex; align-items: center; justify-content: center; color: #555; flex: none; }
.tool.split { width: 40px; justify-content: space-between; padding: 0 3px 0 4px; }
.tool.off { color: #b4b4b4; }
.tool.pin { justify-content: flex-start; padding-left: 6px; }
.caret { width: 6px; height: 4px; }
.sep { width: 1px; height: 35px; background: #cfcfcf; margin: 0 6px 0 7px; flex: none; }
.fit {
  width: 104px; height: 24px; margin: 0 8px; padding: 0 0 0 7px; border: 1px solid #bbb; border-radius: 1px;
  color: #444; font: 12px Inter, sans-serif; appearance: none; flex: none;
  background-color: #f5f5f5;
  background-image: linear-gradient(#d4d4d4, #d4d4d4), linear-gradient(to bottom left, #555 50%, transparent 50%), linear-gradient(to bottom right, #555 50%, transparent 50%);
  background-position: right 17px top, right 9px top 9px, right 5px top 9px;
  background-size: 1px 100%, 4px 4px, 4px 4px;
  background-repeat: no-repeat;
}
.showme { display: flex; align-items: center; gap: 5px; margin-left: 12px; font: 13px "Open Sans", sans-serif; color: #222; white-space: nowrap; }

.body { display: flex; flex: 1; min-height: 0; }

.side { width: 210px; flex: none; display: flex; flex-direction: column; background: #fafafa; border-right: 1px solid #d4d4d4; border-top: 1px solid #d4d4d4; }
.side-tabs { display: flex; height: 26px; flex: none; }
.side-tab { width: 66px; text-align: center; font-size: 13px; color: #333; border-bottom: 1px solid #d4d4d4; }
.side-tab.on { width: 115px; padding-right: 10px; font-weight: 600; color: #111; border-bottom: 0; border-right: 1px solid #d4d4d4; }
.collapse { flex: 1; padding-left: 7px; border-bottom: 1px solid #d4d4d4; }
.side-main { display: flex; flex: 1; min-height: 0; }
.side-content { flex: 1; min-width: 0; overflow: hidden; }
.side h2 { font-size: 13px; font-weight: 500; color: #222; line-height: 20px; }
.side section { margin-right: 1px; }

.devices { height: 101px; padding: 12px 0 0 18px; border-bottom: 1px solid #c8c8c8; }
.device-list li { height: 20px; line-height: 20px; padding-left: 23px; margin-right: 1px; }
.device-list .on { padding-left: 13px; background: #e6e6e6; }
.preview { display: block; width: 130px; height: 23px; margin: 12px 0 0 21px; border: 1px solid #bbb; border-radius: 1px; font-size: 11px; background: #fff; }
.size { height: 73px; padding: 4px 0 0 18px; border-bottom: 1px solid #c8c8c8; }
.size-pick { display: flex; align-items: center; justify-content: space-between; width: 100%; height: 23px; margin-top: 4px; border-bottom: 1px solid #c8c8c8; white-space: nowrap; color: #555; font-variant-ligatures: none; font-feature-settings: "calt" 0; }
.sheets { height: 163px; padding-top: 4px; border-bottom: 1px solid #c8c8c8; }
.sheets h2 { padding-left: 18px; }
.sheet-list { height: 109px; margin-top: 9px; overflow: hidden; }
.sheet-list li { position: relative; display: flex; align-items: center; gap: 11px; height: 20px; padding-left: 19px; font-size: 13px; }
.sheet-list .hover { background: #f4f4f4; }
.s-ico { width: 13px; height: 13px; }
.s-check { position: absolute; left: 26px; top: 9px; width: 10px; height: 10px; }
.objects { padding-top: 1px; }
.objects h2 { padding-left: 12px; }
.object-box { display: flex; height: 206px; margin-top: 4px; }
.object-list { flex: 1; padding-top: 6px; }
.object-list li { display: flex; align-items: center; gap: 6px; height: 20px; padding-left: 15px; white-space: nowrap; color: #333; }
.object-list svg { width: 14px; height: 14px; fill: none; stroke: #555; }
.mini-bar { width: 12px; background: #f0f0f0; display: flex; flex-direction: column; align-items: center; justify-content: space-between; padding: 7px 0; color: #444; flex: none; }
.mini-thumb { width: 10px; height: 143px; margin-bottom: 32px; align-self: flex-end; background: #c1c1c1; }
.flip { transform: rotate(180deg); color: #999; }
.place { display: flex; height: 24px; margin: 5px 0 0 12px; }
.place button { flex: 1; border: 1px solid #c8c8c8; border-right: 0; background: #fff; color: #333; }
.place .on { flex: 0 0 93px; background: #666; border-color: #666; color: #fff; font-weight: 600; }

.vbar { width: 16px; flex: none; background: #f0f0f0; display: flex; flex-direction: column; align-items: center; }
.arr { width: 9px; height: 6px; margin: 6px 0 5px; }
.thumb { width: 15px; background: #cdcdcd; }
.side-thumb { flex: 0 0 91%; margin-bottom: auto; }
.page-thumb { flex: 0 0 75%; margin-bottom: auto; }
.city-thumb { height: 115px; }

.dash { flex: 1; min-width: 0; display: flex; padding-left: 6px; }
.map-panel { flex: 1; min-width: 0; margin-top: 6px; border: 2px solid #c4c4c4; border-width: 2px 0 0 2px; padding: 0 3px 0 4px; display: flex; flex-direction: column; }
.map-title { height: 47px; padding-left: 4px; font: 300 21px/46px "Open Sans", sans-serif; color: #222; white-space: nowrap; overflow: hidden; flex: none; }
.map-view { position: relative; flex: 1; min-height: 0; border-right: 1px solid #e4e4e4; }
.map { display: block; width: 100%; height: 100%; }
.land { fill: #e5e5e5; }
.sea { fill: #fff; }
.faint { fill: #f3f3f3; }
.line { fill: none; stroke: #adadad; stroke-width: 3; stroke-linejoin: round; }
.thin { stroke: #c4c4c4; }
.india { fill: #c2ccda; stroke: #666; stroke-width: 3; stroke-linejoin: round; }
.states { fill: none; stroke: #aab5c4; stroke-width: 3; }
.india-name { font: 33px "Noto Sans", sans-serif; fill: #a3acb8; }
#airports circle { stroke: #5f5f5f; stroke-width: 3; opacity: .92; }
.labels text { font: 11px "Noto Sans", sans-serif; fill: #999; text-anchor: middle; stroke: #f2f2f2; stroke-width: 2px; paint-order: stroke; }
.map-tools { position: absolute; left: 10px; top: 10px; width: 28px; display: flex; flex-direction: column; gap: 9px; }
.map-tools button { display: flex; align-items: center; justify-content: center; }
.map-search, .map-zoom { border: 1px solid #b4b4b4; background: rgba(250, 250, 250, .85); }
.map-tools .map-search { height: 28px; }
.map-zoom { height: 110px; display: flex; flex-direction: column; align-items: center; }
.map-zoom button { width: 26px; height: 26px; }
.map-zoom .reset { width: 22px; height: 22px; border: 1px solid #aaa; background: #e8e8e8; }
.map-zoom .more { flex: 1; margin-top: 5px; border-top: 1px solid #d4d4d4; width: 20px; }

.count-panel { position: relative; width: 184px; margin-top: 6px; padding: 3px 3px 0 2px; border: 2px solid #666; border-width: 2px 2px 0 3px; box-shadow: inset 1px 0 #b7c2d6; flex: none; }
.count-title { width: 174px; height: 62px; margin-top: 1px; border: 1px dotted #447; background: #80ffff; font: 300 20px/28px "Open Sans", sans-serif; color: #222; padding: 1px 50px 0 0; }
.count { margin-top: 33px; padding-left: 5px; font: 300 33px/44px "Open Sans", sans-serif; color: #222; }
.hbar { display: flex; align-items: center; height: 16px; width: 174px; margin-top: 27px; padding: 0 5px; background: #f0f0f0; }
.hthumb { width: 27px; height: 15px; margin: 0 auto 0 6px; background: #cdcdcd; }
.harr { width: 6px; height: 9px; }
.grip { position: absolute; left: 64px; top: -2px; width: 50px; height: 13px; background: #666; border-radius: 0 0 2px 2px; }
.grip::before { content: ""; position: absolute; left: 5px; right: 5px; top: 4px; height: 6px; border: 1px solid #fff; border-width: 1px 0; }
.panel-menu { position: absolute; z-index: 2; left: 100%; top: -2px; width: 21px; height: 84px; background: #666; border-radius: 0 2px 2px 0; display: flex; flex-direction: column; }
.panel-menu button { flex: 1; display: flex; align-items: center; justify-content: center; }

.legends { width: 167px; padding: 11px 15px 0 3px; display: flex; flex-direction: column; flex: none; overflow: hidden; font-family: "Open Sans", sans-serif; }
.leg-head { display: block; height: 20px; font: 12px/20px "Open Sans", sans-serif; color: #111; white-space: nowrap; flex: none; }
.country { width: 100%; height: 20px; margin-top: 2px; padding: 0 3px; border: 1px solid #888; font: 12px "Open Sans", sans-serif; color: #444; flex: none; }
.slide-row { display: flex; align-items: center; gap: 4px; height: 24px; margin-bottom: 9px; flex: none; }
.slide { flex: 1; min-width: 0; margin: 0; height: 12px; appearance: none; background: linear-gradient(#e2e2e2, #e2e2e2) center / 100% 4px no-repeat; }
.slide::-webkit-slider-thumb { appearance: none; width: 10px; height: 10px; border: 1px solid #555; border-radius: 50%; background: #fff; }
.slide-row button { width: 16px; height: 16px; border: 1px solid #c4c4c4; border-radius: 1px; display: flex; align-items: center; justify-content: center; }
.leg-list { padding-left: 4px; flex: 1; overflow: hidden; font: 12px/20px "Open Sans", sans-serif; color: #555; }
.leg-list.one { flex: none; margin-bottom: 6px; }
.leg-list li { display: flex; align-items: center; gap: 5px; height: 20px; white-space: nowrap; }
.sw { width: 13px; height: 13px; border: 1px solid #666; flex: none; }
.city { display: flex; flex: 1; min-height: 0; }
.k-in { background: #d3dcea; }
.k0 { background: #7092b9; } .k1 { background: #b2d3ee; } .k2 { background: #f5a455; } .k3 { background: #ffcb96; }
.k4 { background: #79b371; } .k5 { background: #a3da96; } .k6 { background: #c4ac55; } .k7 { background: #f4d780; }
.k8 { background: #6cada9; } .k9 { background: #9ec8c3; } .k10 { background: #e77678; } .k11 { background: #ffaeab; }
.k12 { background: #938b89; } .k13 { background: #c7bebb; } .k14 { background: #dc8bac; } .k15 { background: #fbccdc; }
.k16 { background: #bf94b4; } .k17 { background: #dab5d3; } .k18 { background: #b09080; } .k19 { background: #dfc4b9; }
.gutter { width: 140px; background: #f5f5f5; flex: none; }

.tabs { display: flex; height: 30px; background: #e6e6e6; border-top: 1px solid #c8c8c8; border-bottom: 1px solid #c8c8c8; color: #666; flex: none; }
.tab { border-right: 1px solid #c8c8c8; display: flex; align-items: center; justify-content: center; gap: 4px; white-space: nowrap; flex: none; }
.tab.source { width: 130px; justify-content: flex-start; padding-left: 10px; gap: 5px; }
.tab.sheet { width: 57px; padding-right: 2px; }
.tab.board { width: 104px; padding-right: 2px; }
.tab.board.on { width: 102px; background: #fafafa; color: #333; font-weight: 600; }
.tab.story { width: 71px; }
.tab.add { width: 32px; }
.t-ico { width: 12px; height: 12px; }

.status { display: flex; align-items: center; height: 19px; background: #ebebeb; color: #222; font-size: 11px; padding-left: 2px; flex: none; white-space: nowrap; }
.st-mark { width: 52px; }
.st-rows { width: 110px; }
.cell { height: 100%; border-left: 1px solid #c8c8c8; display: flex; align-items: center; flex: none; }
.c127 { width: 127px; } .c27 { width: 27px; } .c47 { width: 47px; }
.nav { width: 71px; padding-left: 7px; }
.views { width: 68px; padding-left: 9px; }
.edge { height: 2px; background: #3f4043; flex: none; }

.watermark { position: absolute; z-index: 3; right: 57px; bottom: 35px; display: flex; flex-direction: column; font-family: "Open Sans", sans-serif; color: rgba(140, 140, 140, .6); pointer-events: none; white-space: nowrap; width: 236px; }
.watermark strong { font-size: 19px; line-height: 24px; font-weight: 400; }
.watermark span { font-size: 14px; line-height: 20px; }
```
